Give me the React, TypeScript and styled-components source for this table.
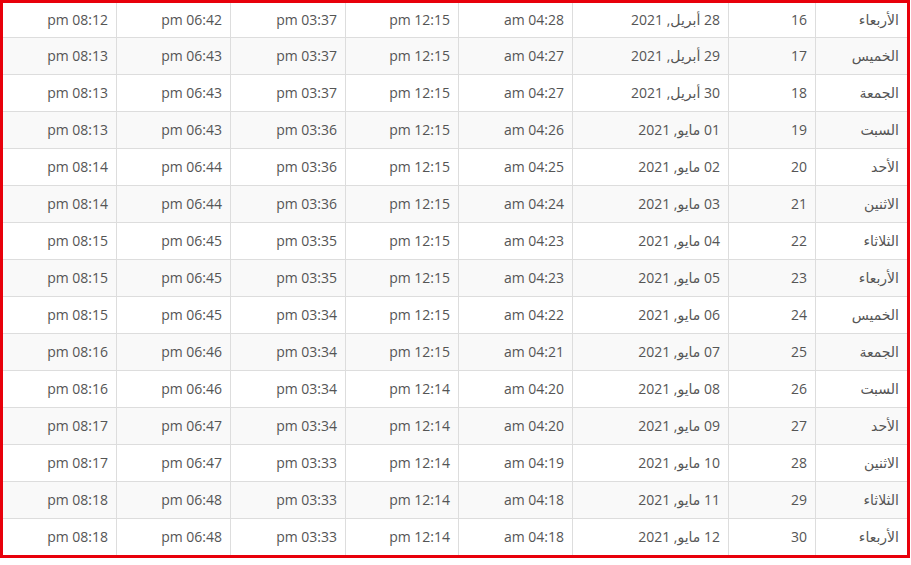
import styled, { createGlobalStyle } from "styled-components";

type Day = {
  name: string;
  index: number;
  date: string;
  times: string[];
};

const GlobalStyle = createGlobalStyle`
  html, body {
    margin: 0;
    padding: 0;
    background: #ffffff;
  }
  body {
    font-family: "Open Sans", "DejaVu Sans", sans-serif;
    font-size: 14px;
    color: #555555;
  }
`;

const Frame = styled.div`
  width: 904px;
  border: 3px solid #e8000b;
  background: #ffffff;
`;

const Table = styled.div`
  display: flex;
  flex-direction: column;
  direction: rtl;
`;

const Row = styled.div<{ $striped: boolean }>`
  display: grid;
  grid-template-columns: 92px 87px 156px 114px 113px 115px 114px 113px;
  box-sizing: border-box;
  height: 37px;
  border-top: 1px solid #dddddd;
  background: ${(p) => (p.$striped ? "#f9f9f9" : "#ffffff")};
  &:first-child {
    height: 34px;
    border-top: none;
  }
`;

const Cell = styled.div`
  display: flex;
  align-items: center;
  justify-content: flex-start;
  box-sizing: border-box;
  padding: 0 8px 1px;
  border-left: 1px solid #dddddd;
  white-space: nowrap;
  &:last-child {
    border-left: none;
  }
`;

const days: Day[] = [
  { name: "الأربعاء", index: 16, date: "28 أبريل, 2021", times: ["04:28 am", "12:15 pm", "03:37 pm", "06:42 pm", "08:12 pm"] },
  { name: "الخميس", index: 17, date: "29 أبريل, 2021", times: ["04:27 am", "12:15 pm", "03:37 pm", "06:43 pm", "08:13 pm"] },
  { name: "الجمعة", index: 18, date: "30 أبريل, 2021", times: ["04:27 am", "12:15 pm", "03:37 pm", "06:43 pm", "08:13 pm"] },
  { name: "السبت", index: 19, date: "01 مايو, 2021", times: ["04:26 am", "12:15 pm", "03:36 pm", "06:43 pm", "08:13 pm"] },
  { name: "الأحد", index: 20, date: "02 مايو, 2021", times: ["04:25 am", "12:15 pm", "03:36 pm", "06:44 pm", "08:14 pm"] },
  { name: "الاثنين", index: 21, date: "03 مايو, 2021", times: ["04:24 am", "12:15 pm", "03:36 pm", "06:44 pm", "08:14 pm"] },
  { name: "الثلاثاء", index: 22, date: "04 مايو, 2021", times: ["04:23 am", "12:15 pm", "03:35 pm", "06:45 pm", "08:15 pm"] },
  { name: "الأربعاء", index: 23, date: "05 مايو, 2021", times: ["04:23 am", "12:15 pm", "03:35 pm", "06:45 pm", "08:15 pm"] },
  { name: "الخميس", index: 24, date: "06 مايو, 2021", times: ["04:22 am", "12:15 pm", "03:34 pm", "06:45 pm", "08:15 pm"] },
  { name: "الجمعة", index: 25, date: "07 مايو, 2021", times: ["04:21 am", "12:15 pm", "03:34 pm", "06:46 pm", "08:16 pm"] },
  { name: "السبت", index: 26, date: "08 مايو, 2021", times: ["04:20 am", "12:14 pm", "03:34 pm", "06:46 pm", "08:16 pm"] },
  { name: "الأحد", index: 27, date: "09 مايو, 2021", times: ["04:20 am", "12:14 pm", "03:34 pm", "06:47 pm", "08:17 pm"] },
  { name: "الاثنين", index: 28, date: "10 مايو, 2021", times: ["04:19 am", "12:14 pm", "03:33 pm", "06:47 pm", "08:17 pm"] },
  { name: "الثلاثاء", index: 29, date: "11 مايو, 2021", times: ["04:18 am", "12:14 pm", "03:33 pm", "06:48 pm", "08:18 pm"] },
  { name: "الأربعاء", index: 30, date: "12 مايو, 2021", times: ["04:18 am", "12:14 pm", "03:33 pm", "06:48 pm", "08:18 pm"] },
];

export default function App() {
  return (
    <>
      <GlobalStyle />
      <Frame>
        <Table>
          {days.map((day, i) => (
            <Row key={day.index} $striped={i % 2 === 1}>
              <Cell>{day.name}</Cell>
              <Cell>{day.index}</Cell>
              <Cell>{day.date}</Cell>
              {day.times.map((t, j) => (
                <Cell key={j}>{t}</Cell>
              ))}
            </Row>
          ))}
        </Table>
      </Frame>
    </>
  );
}
